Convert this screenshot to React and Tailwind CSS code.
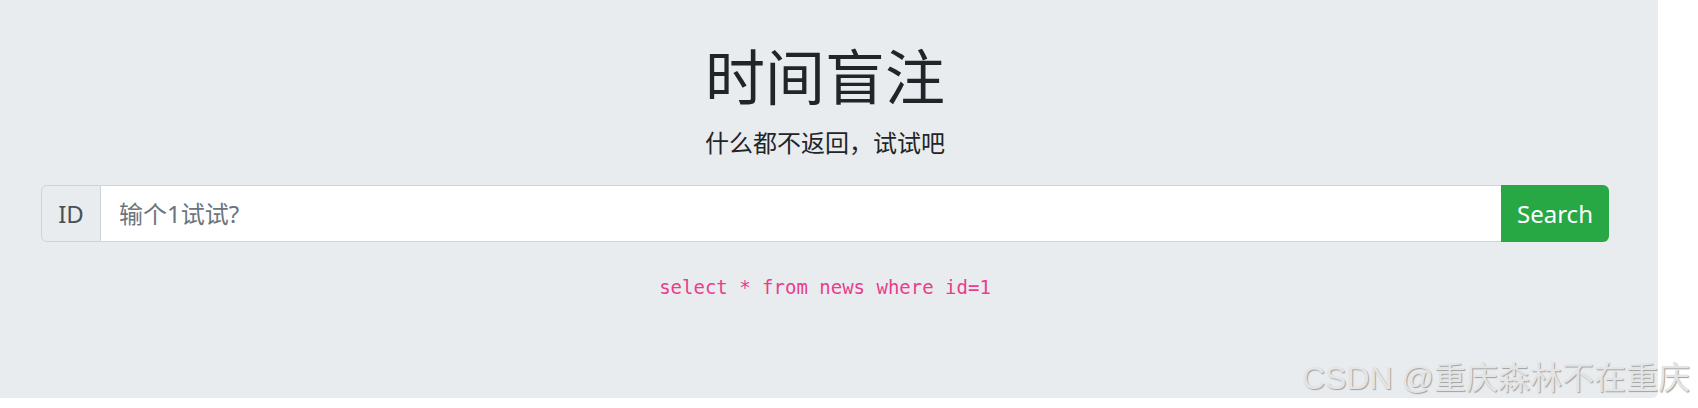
import React from 'react';

const cjk = { fontFamily: '"Noto Sans", "Noto Sans CJK SC", sans-serif' };

const App = () => {
  return (
    <div className="relative w-[1698px] h-[408px] bg-white overflow-hidden" style={cjk}>
      <div className="w-[1658px] h-[398px] bg-[#e9ecef] rounded-br-md pt-[41px] pl-[41px] pr-[49px]">
        {/* Tiêu đề */}
        <h1 className="text-center text-[60px] leading-[72px] text-[#212529] font-normal">时间盲注</h1>
        <p className="mt-[12px] text-center text-[24px] leading-[36px] text-[#212529]">什么都不返回，试试吧</p>

        {/* Ô tìm kiếm */}
        <div className="mt-[24px] flex h-[57px]">
          <span className="flex w-[60px] items-center justify-center rounded-l-md border border-[#ced4da] bg-[#e9ecef] text-[24px] text-[#495057]">
            ID
          </span>
          <input
            type="text"
            placeholder="输个1试试?"
            className="flex-1 border-y border-[#ced4da] bg-white px-[18px] text-[24px] text-[#495057] outline-none placeholder:text-[#6c757d]"
          />
          <button className="w-[108px] rounded-r-md bg-[#28a745] text-[24px] text-white">Search</button>
        </div>

        <p
          className="mt-[31px] text-center text-[19px] leading-[28px] text-[#e83e8c]"
          style={{ fontFamily: '"DejaVu Sans Mono", "Liberation Mono", monospace' }}
        >
          select * from news where id=1
        </p>
      </div>

      {/* watermark */}
      <div
        className="absolute right-[8px] top-[356px] text-[32px] leading-[44px] text-[#e4e4e4] [text-shadow:1px_1px_1px_#a0a0a0]"
        style={{ fontFamily: '"Liberation Sans", "Noto Sans CJK SC", sans-serif' }}
      >
        CSDN @重庆森林不在重庆
      </div>
    </div>
  );
};

export default App;
